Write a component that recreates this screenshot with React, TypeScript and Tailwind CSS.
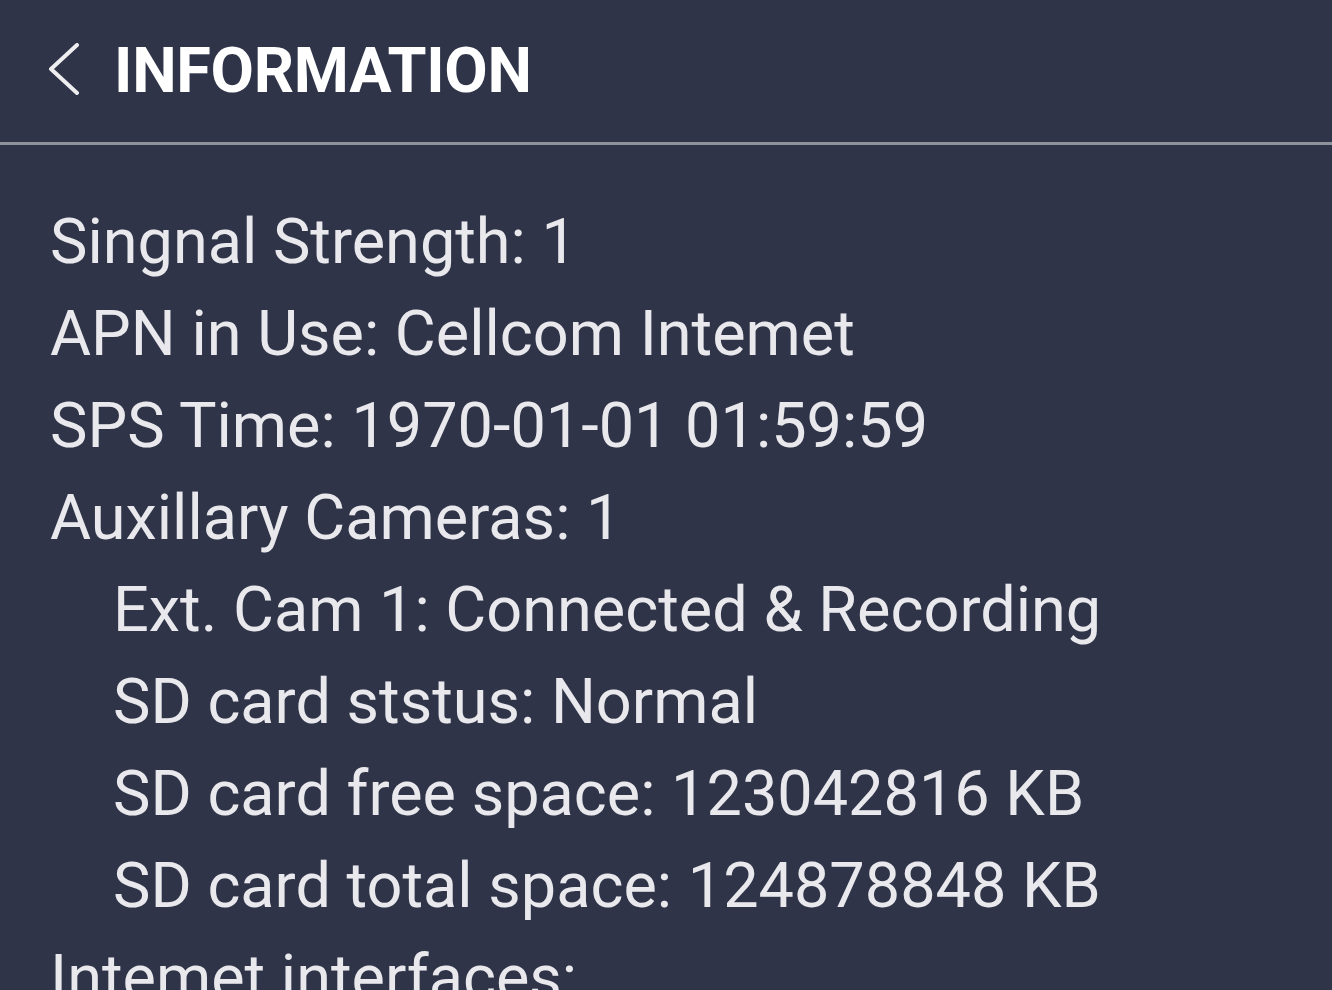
import React from "react";

const ROWS: { text: string; indent?: boolean }[] = [
  { text: "Singnal Strength: 1" },
  { text: "APN in Use: Cellcom Intemet" },
  { text: "SPS Time: 1970-01-01 01:59:59" },
  { text: "Auxillary Cameras: 1" },
  { text: "Ext. Cam 1: Connected & Recording", indent: true },
  { text: "SD card ststus: Normal", indent: true },
  { text: "SD card free space: 123042816 KB", indent: true },
  { text: "SD card total space: 124878848 KB", indent: true },
  { text: "Intemet interfaces:" },
];

export default function App() {
  return (
    <div className="h-[990px] w-full overflow-hidden bg-[#2f3448] font-['Roboto',sans-serif]">
      {/* Header */}
      <div className="flex h-[145px] items-center border-b-3 border-[#8f929b]">
        <svg width="34" height="56" viewBox="0 0 34 56" className="ml-[46px] shrink-0">
          <path d="M31 2 L5 26 L31 50" fill="none" stroke="#eeeef1" strokeWidth="4" strokeLinecap="round" strokeLinejoin="round" />
        </svg>
        <span className="ml-[34px] text-[63px] font-bold tracking-[-0.3px] text-white">INFORMATION</span>
      </div>

      {/* Info list */}
      <div className="pt-[51px] pl-[50px]">
        {ROWS.map((r) => (
          <div
            key={r.text}
            className={`whitespace-nowrap text-[63px] leading-[92px] text-[#e9e9ed] ${r.indent ? "pl-[63px]" : ""}`}
          >
            {r.text}
          </div>
        ))}
      </div>
    </div>
  );
}
